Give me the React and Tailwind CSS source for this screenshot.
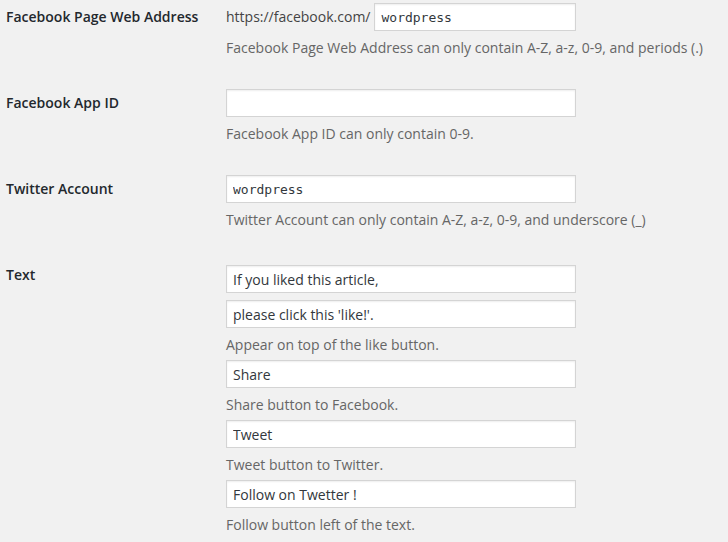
export default function App() {
  const font = { fontFamily: '"Open Sans", "Noto Sans", sans-serif' };
  const inputCls =
    "block h-[28px] w-[350px] border border-[#d4d4d4] bg-white px-[6px] text-[14px] text-[#32373c] shadow-[inset_0_1px_2px_rgba(0,0,0,0.07)] outline-none";
  const monoCls =
    "block h-[28px] border border-[#d4d4d4] bg-white px-[6px] text-[13px] text-[#32373c] shadow-[inset_0_1px_2px_rgba(0,0,0,0.07)] outline-none font-['DejaVu_Sans_Mono',monospace]";
  const descCls = "text-[14px] leading-5 text-[#666]";
  const labelCls = "w-[220px] shrink-0 pt-[7px] text-[14px] leading-5 font-semibold text-[#23282d]";

  return (
    <div className="min-h-screen bg-[#f1f1f1] pl-[6px]" style={font}>
      <div className="flex flex-col gap-[28px]">
        {/* Facebook page */}
        <div className="flex items-start">
          <div className={labelCls}>Facebook Page Web Address</div>
          <div className="pt-[3px]">
            <div className="flex items-center gap-[4px]">
              <span className="text-[14px] leading-5 text-[#444]">https://facebook.com/</span>
              <input className={monoCls + " w-[202px]"} defaultValue="wordpress" />
            </div>
            <p className={descCls + " mt-[7px]"}>
              Facebook Page Web Address can only contain A-Z, a-z, 0-9, and periods (.)
            </p>
          </div>
        </div>

        {/* App ID */}
        <div className="flex items-start">
          <div className={labelCls}>Facebook App ID</div>
          <div className="pt-[3px]">
            <input className={monoCls + " w-[350px]"} defaultValue="" />
            <p className={descCls + " mt-[7px]"}>Facebook App ID can only contain 0-9.</p>
          </div>
        </div>

        {/* Twitter */}
        <div className="flex items-start">
          <div className={labelCls}>Twitter Account</div>
          <div className="pt-[3px]">
            <input className={monoCls + " w-[350px]"} defaultValue="wordpress" />
            <p className={descCls + " mt-[7px]"}>
              Twitter Account can only contain A-Z, a-z, 0-9, and underscore (_)
            </p>
          </div>
        </div>

        {/* Text */}
        <div className="flex items-start">
          <div className={labelCls}>Text</div>
          <div className="pt-[7px]">
            <input className={inputCls} defaultValue="If you liked this article," />
            <input className={inputCls + " mt-[7px]"} defaultValue="please click this 'like!'." />
            <p className={descCls + " mt-[7px]"}>Appear on top of the like button.</p>
            <input className={inputCls + " mt-[5px]"} defaultValue="Share" />
            <p className={descCls + " mt-[7px]"}>Share button to Facebook.</p>
            <input className={inputCls + " mt-[5px]"} defaultValue="Tweet" />
            <p className={descCls + " mt-[7px]"}>Tweet button to Twitter.</p>
            <input className={inputCls + " mt-[5px]"} defaultValue="Follow on Twetter !" />
            <p className={descCls + " mt-[7px]"}>Follow button left of the text.</p>
          </div>
        </div>
      </div>
    </div>
  );
}
